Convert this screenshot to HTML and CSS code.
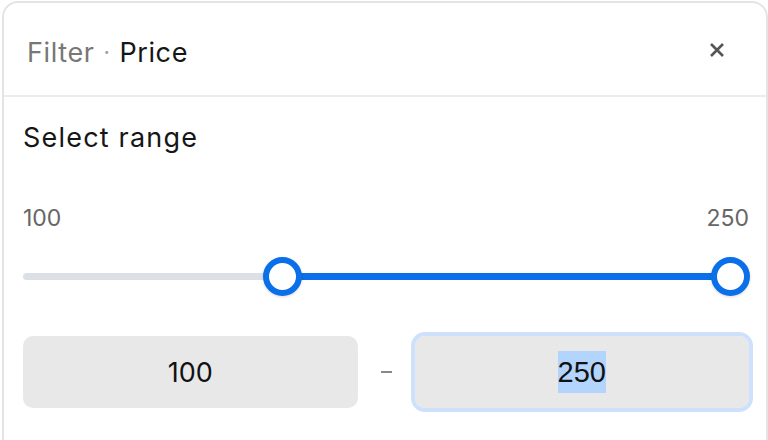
FILE: index.html
```html
<!DOCTYPE html>
<html>
<head>
<meta charset="utf-8">
<link rel="stylesheet" href="styles.css">
</head>
<body>
<div class="panel">
  <div class="header">
    <div class="title"><span class="muted">Filter</span><span class="dot">·</span><span class="strong">Price</span></div>
    <button class="close" aria-label="Close">
      <svg width="16" height="16" viewBox="0 0 16 16"><path d="M2 2 L14 14 M14 2 L2 14" stroke="#555" stroke-width="2.6" stroke-linecap="butt" fill="none"/></svg>
    </button>
  </div>
  <div class="body">
    <div class="heading">Select range</div>
    <div class="labels"><span>100</span><span>250</span></div>
    <div class="slider">
      <div class="track">
        <div class="fill" style="left: 34.9%; right: 0;"></div>
      </div>
      <div class="thumbs">
        <div class="thumb" style="left: 34.9%;"></div>
        <div class="thumb" style="left: 100%;"></div>
      </div>
    </div>
    <div class="inputs">
      <div class="box">100</div>
      <div class="dash"></div>
      <div class="box focused"><span class="sel">250</span></div>
    </div>
  </div>
</div>
</body>
</html>
```
FILE: styles.css
```css
html, body {
  margin: 0;
  padding: 0;
  background: #fff;
}
body {
  width: 768px;
  height: 440px;
  overflow: hidden;
  font-family: "Inter", "Open Sans", sans-serif;
}
.panel {
  box-sizing: border-box;
  margin: 1px 0 0 2px;
  width: 766px;
  height: 460px;
  border: 2px solid #e4e4e4;
  border-radius: 16px;
  background: #fff;
}
.header {
  height: 92px;
  display: flex;
  align-items: center;
  justify-content: space-between;
  padding: 0 41px 0 23px;
  border-bottom: 2px solid #ececec;
}
.title {
  font-size: 27px;
  letter-spacing: 0.6px;
  display: flex;
  align-items: center;
  margin-top: 6px;
}
.muted { color: #777; }
.dot { color: #999; margin: 0 9px; font-size: 22px; }
.strong { color: #161616; }
.close {
  border: 0;
  background: transparent;
  padding: 0;
  width: 16px;
  height: 16px;
  display: flex;
  margin-top: 2px;
}
.body {
  padding: 0 17px 0 19px;
}
.heading {
  font-size: 27px;
  letter-spacing: 1.2px;
  color: #161616;
  margin-top: 24px;
  line-height: 34px;
}
.labels {
  display: flex;
  justify-content: space-between;
  font-size: 23px;
  color: #666;
  margin-top: 49px;
  line-height: 28px;
}
.slider {
  position: relative;
  height: 40px;
  margin-top: 25px;
}
.track {
  position: absolute;
  left: 0;
  right: 0;
  top: 16px;
  height: 7px;
  border-radius: 4px;
  background: #dcdfe6;
}
.fill {
  position: absolute;
  top: 0;
  bottom: 0;
  background: #0a6fe8;
}
.thumbs {
  position: absolute;
  left: 19px;
  right: 19px;
  top: 0;
  bottom: 0;
}
.thumb {
  position: absolute;
  top: 0;
  width: 39px;
  height: 39px;
  box-sizing: border-box;
  margin-left: -19.5px;
  border-radius: 50%;
  border: 6px solid #0a6fe8;
  background: #fff;
  box-shadow: 0 1px 3px rgba(0,0,0,0.15);
}
.inputs {
  display: flex;
  align-items: center;
  margin-top: 39px;
}
.box {
  flex: 1;
  height: 72px;
  border-radius: 10px;
  background: #e8e8e8;
  display: flex;
  align-items: center;
  justify-content: center;
  font-size: 27px;
  color: #111;
}
.dash {
  width: 11px;
  height: 2px;
  background: #888;
  margin: 0 23px 0 23px;
}
.box.focused {
  outline: 4px solid #cde1fc;
  font-family: "Liberation Sans", Arial, sans-serif;
  font-size: 29px;
}
.sel {
  background: #b3d4fc;
  line-height: 42px;
}
```
